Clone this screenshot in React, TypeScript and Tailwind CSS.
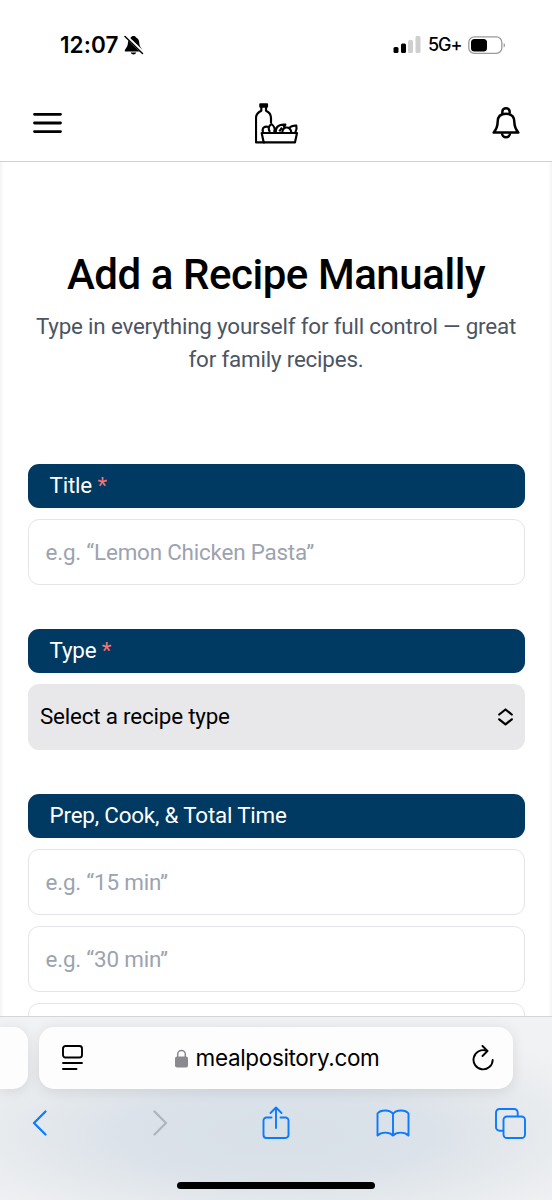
import React from "react";

const FIELDS = [
  {
    label: "Title",
    required: true,
    placeholders: ["e.g. “Lemon Chicken Pasta”"],
  },
  {
    label: "Type",
    required: true,
    select: "Select a recipe type",
    placeholders: [],
  },
  {
    label: "Prep, Cook, & Total Time",
    required: false,
    placeholders: ["e.g. “15 min”", "e.g. “30 min”", "e.g. “45 min”"],
  },
];

function StatusBar() {
  return (
    <div className="flex h-[90px] items-center justify-between pl-[60px] pr-[46px] text-black">
      <div className="flex items-center gap-[5px]">
        <span className="font-['Inter'] text-[22.500px] font-semibold leading-none tracking-[0.1px]">
          12:07
        </span>
        <svg width="20" height="20" viewBox="0 0 20 20">
          <path
            d="M9.500 1c-1.400 0-2.300.7-2.600 1.600C4.600 3.600 4 5.500 3.900 8.500 3.700 12 1.300 13.500.8 15.200c-.2.7.2 1.300 1 1.300h15.600c.8 0 1.200-.6 1-1.300-.5-1.700-2.900-3.200-3.100-6.700-.1-3-.9-4.900-3.200-5.900C11.800 1.700 10.900 1 9.500 1ZM6.800 17.500c.3 1.300 1.400 2 2.700 2s2.400-.7 2.700-2Z"
            fill="black"
          />
          <path d="M1.500.8 19.500 18" stroke="white" strokeWidth="3.400" />
          <path
            d="M1 1.500 18.500 18.500"
            stroke="black"
            strokeWidth="1.500"
            strokeLinecap="round"
          />
        </svg>
      </div>
      <div className="flex items-center">
        <svg width="28" height="18" viewBox="0 0 28 18">
          <rect x="0.500" y="11" width="5" height="6" rx="1.500" />
          <rect x="8" y="7.500" width="5" height="9.500" rx="1.500" />
          <rect x="15" y="4" width="5" height="13" rx="1.500" fill="#cfcfcf" />
          <rect x="22.500" y="0" width="5" height="17" rx="1.500" fill="#cfcfcf" />
        </svg>
        <span className="ml-[7px] w-[33px] whitespace-nowrap font-['Inter'] text-[18px] font-medium leading-none tracking-[-1.1px]">
          5G+
        </span>
        <svg className="ml-[7px]" width="38" height="19" viewBox="0 0 38 19">
          <rect
            x="0.800"
            y="0.900"
            width="33"
            height="16.500"
            rx="5.500"
            fill="none"
            stroke="#9a9a9a"
            strokeWidth="1.300"
          />
          <rect x="3" y="3" width="16" height="12.500" rx="3.500" />
          <path d="M35.600 7v4.500c1.900-.7 1.900-3.800 0-4.500Z" fill="#9a9a9a" />
        </svg>
      </div>
    </div>
  );
}

function Header() {
  return (
    <header className="flex h-[72px] items-center justify-between border-b border-[#cdd0da] pb-[6px] pl-[33px] pr-[32px]">
      <svg width="29" height="22" viewBox="0 0 29 22">
        <path
          d="M1.500 2.300h26M1.500 11h26M1.500 19.600h26"
          stroke="black"
          strokeWidth="2.800"
          strokeLinecap="round"
        />
      </svg>
      <svg
        width="44"
        height="42"
        viewBox="30 10 132 126"
        fill="none"
        stroke="black"
        strokeWidth="6.500"
        strokeLinejoin="round"
      >
        <path d="M46 17h20v7H46Z" fill="black" />
        <path d="M49 24v12C38 41 33 48 33 58v73h26M63 24v12c11 5 15 12 15 22v16" />
        <path d="M50 103h106l-6 28H56Z" />
        <path d="M54 100c-4-12 4-19 18-15" />
        <path d="M75 100c-7-9-4-18 4-24 8 6 13 15 8 24" />
        <path d="M92 100c0-15 10-24 29-22-1 4-3 6-6 8M103 98l8-11" />
        <path d="M112 100c2-18 23-18 27 0" />
        <path d="M132 88c5-5 13-8 22-7 2 8 0 15-3 20" />
      </svg>
      <svg
        width="28"
        height="33"
        viewBox="21 17.500 84 99"
        fill="none"
        stroke="black"
        strokeWidth="7.500"
        strokeLinejoin="round"
      >
        <path d="M52 41v-6a11 11 0 0 1 22 0v6" />
        <path d="M63 41C46 41 38 50 38 65c0 15-4 23-12 32h74c-8-9-12-17-12-32 0-15-8-24-25-24Z" />
        <path d="M51 99a12 12 0 0 0 24 0" />
      </svg>
    </header>
  );
}

function RecipeForm() {
  return (
    <main className="h-[854px] overflow-hidden px-[27.500px] pt-[87px] shadow-[inset_4px_0_4px_-3px_#efefef,inset_-4px_0_4px_-3px_#efefef]">
      <h1 className="text-center text-[42px] font-medium leading-[52px] tracking-[-0.45px] text-black">
        Add a Recipe Manually
      </h1>
      <p className="mt-[9px] text-center text-[22.400px] leading-[33px] tracking-[-0.19px] text-[#4b5563]">
        Type in everything yourself for full control — great
        <br />
        for family recipes.
      </p>
      <form className="mt-[88.200px] flex flex-col gap-[44px] text-[22.400px] tracking-[-0.19px]">
        {FIELDS.map((field) => (
          <div key={field.label} className="flex flex-col gap-[11px]">
            <label className="flex h-[43.800px] items-center gap-[5.500px] rounded-[11px] bg-[#003961] px-[22px] text-white">
              {field.label}
              {field.required && <span className="text-[#f87171]">*</span>}
            </label>
            {field.select && (
              <button
                type="button"
                className="flex h-[66px] items-center justify-between rounded-[11px] bg-[#e8e8ea] pl-[12.500px] pr-[12px] tracking-[-0.19px] text-black"
              >
                {field.select}
                <svg
                  width="15"
                  height="18"
                  viewBox="0 0 15 18"
                  fill="none"
                  stroke="black"
                  strokeWidth="2.200"
                  strokeLinecap="round"
                  strokeLinejoin="round"
                >
                  <path d="m1.200 6.500 6.300-5 6.300 5M1.200 11.300l6.300 5 6.300-5" />
                </svg>
              </button>
            )}
            {field.placeholders.map((placeholder) => (
              <input
                key={placeholder}
                placeholder={placeholder}
                className="h-[66px] w-full shrink-0 rounded-[11px] border-[1.400px] border-[#e3e5ea] bg-white px-[17px] tracking-[-0.19px] placeholder:text-[#9ca3af]"
              />
            ))}
          </div>
        ))}
      </form>
    </main>
  );
}

function BrowserBar() {
  return (
    <footer className="flex h-[184px] flex-col overflow-hidden border-t border-[#d5d5d7] bg-[radial-gradient(ellipse_70%_60%_at_50%_64%,#d8e0e8_0%,#dbe2e9_40%,#e8ebee_72%,#f1f2f4_100%)]">
      <div className="mt-[10px] flex h-[62px] gap-[11px]">
        <div className="w-[27.500px] rounded-r-[15px] bg-[#fdfdfe] shadow-[0_2px_14px_rgba(0,0,0,0.1)]" />
        <div className="flex w-[474.500px] items-center justify-between rounded-[15px] bg-[#fdfdfe] pl-[23.500px] pr-[19px] shadow-[0_2px_14px_rgba(0,0,0,0.1)]">
          <svg
            width="21"
            height="26"
            viewBox="0 0 21 26"
            fill="none"
            stroke="black"
            strokeWidth="1.900"
            strokeLinecap="round"
          >
            <rect x="1" y="1" width="19" height="11.500" rx="2.500" />
            <path d="M1 18h19M1 24h13.500" />
          </svg>
          <div className="mr-[1px] flex items-center gap-[8px]">
            <svg width="13" height="19" viewBox="0 0 13 19">
              <rect x="0" y="7.500" width="13" height="11" rx="2" fill="#8a898e" />
              <path
                d="M2.700 8V5.200a3.800 3.800 0 0 1 7.600 0V8"
                fill="none"
                stroke="#8a898e"
                strokeWidth="1.500"
              />
            </svg>
            <span className="font-['Inter'] text-[22.500px] leading-none tracking-[-0.35px] text-black">
              mealpository.com
            </span>
          </div>
          <svg
            width="22"
            height="26"
            viewBox="0 0 22 26"
            fill="none"
            stroke="black"
            strokeWidth="1.900"
            strokeLinecap="round"
            strokeLinejoin="round"
          >
            <path d="M14.500 5.800A9.600 9.600 0 1 0 20.700 15M10.500 1l5 5-5 5" />
          </svg>
        </div>
      </div>
      <div className="-ml-[19px] mt-[15px] grid h-[38px] w-[588px] shrink-0 grid-cols-5 items-center justify-items-center text-[#0a7aff]">
        <svg width="15" height="26" viewBox="0 0 15 26" fill="none" stroke="currentColor" strokeWidth="2.200" strokeLinecap="round" strokeLinejoin="round">
          <path d="M13.500 1.500 2 13l11.500 11.500" />
        </svg>
        <svg className="ml-[7px]" width="15" height="26" viewBox="0 0 15 26" fill="none" stroke="#adb4bd" strokeWidth="2.200" strokeLinecap="round" strokeLinejoin="round">
          <path d="M1.500 1.500 13 13 1.500 24.500" />
        </svg>
        <svg className="ml-[2px]" width="28" height="34" viewBox="0 0 28 34" fill="none" stroke="currentColor" strokeWidth="1.900" strokeLinecap="round" strokeLinejoin="round">
          <path d="M9.500 11.500H4.500a3 3 0 0 0-3 3V29a3 3 0 0 0 3 3h19a3 3 0 0 0 3-3V14.500a3 3 0 0 0-3-3h-5M14 22V1.500M8.500 7 14 1.500 19.500 7" />
        </svg>
        <svg width="34" height="28" viewBox="0 0 34 28" fill="none" stroke="currentColor" strokeWidth="1.900" strokeLinecap="round" strokeLinejoin="round">
          <path d="M17 4.800C14 .4 4.500.4 1.500 4.500v22C5 22.800 13.500 22.500 17 26.500c3.500-4 12-3.700 15.500 0v-22C29.500.4 20 .4 17 4.800v21.500" />
        </svg>
        <svg width="31" height="31" viewBox="0 0 31 31" fill="none" stroke="currentColor" strokeWidth="1.900" strokeLinejoin="round">
          <rect x="8.500" y="8.500" width="21.500" height="21.500" rx="3.500" />
          <path d="M8.500 22.700h-4A3.500 3.500 0 0 1 1 19.200V4.500A3.500 3.500 0 0 1 4.500 1h14.700a3.500 3.500 0 0 1 3.500 3.500v4" />
        </svg>
      </div>
      <div className="mx-auto mt-[40px] h-[7px] w-[198px] shrink-0 rounded-full bg-black" />
    </footer>
  );
}

export default function App() {
  return (
    <div className="flex h-[1200px] w-[552px] flex-col overflow-hidden bg-white font-['Roboto',sans-serif]">
      <StatusBar />
      <Header />
      <RecipeForm />
      <BrowserBar />
    </div>
  );
}
